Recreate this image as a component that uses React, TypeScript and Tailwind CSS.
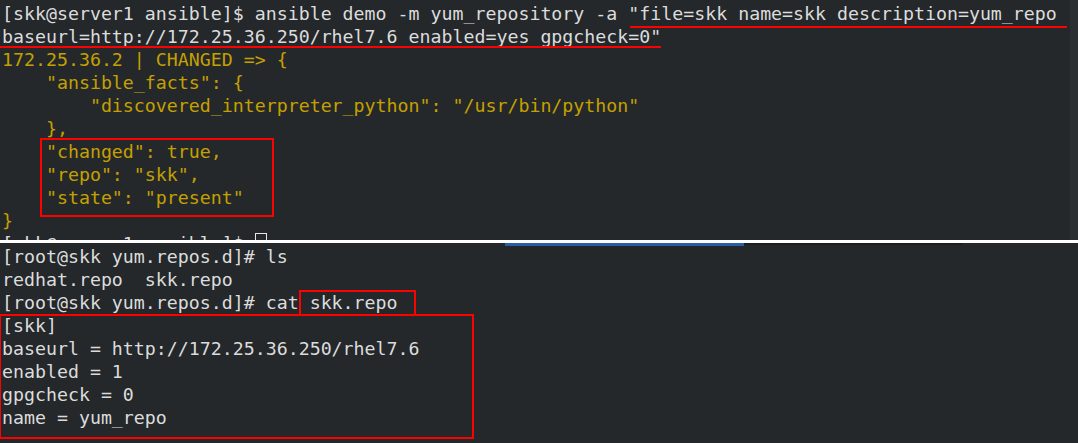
import React from "react";

const Y = "text-[#c4a000]";

export default function App() {
  const top: { t: React.ReactNode; c?: string }[] = [
    { t: '[skk@server1 ansible]$ ansible demo -m yum_repository -a "file=skk name=skk description=yum_repo' },
    { t: 'baseurl=http://172.25.36.250/rhel7.6 enabled=yes gpgcheck=0"' },
    { t: "172.25.36.2 | CHANGED => {", c: Y },
    { t: '    "ansible_facts": {', c: Y },
    { t: '        "discovered_interpreter_python": "/usr/bin/python"', c: Y },
    { t: "    },", c: Y },
    { t: '    "changed": true,', c: Y },
    { t: '    "repo": "skk",', c: Y },
    { t: '    "state": "present"', c: Y },
    { t: "}", c: Y },
  ];
  const bottom = [
    "[root@skk yum.repos.d]# ls",
    "redhat.repo  skk.repo",
    "[root@skk yum.repos.d]# cat skk.repo",
    "[skk]",
    "baseurl = http://172.25.36.250/rhel7.6",
    "enabled = 1",
    "gpgcheck = 0",
    "name = yum_repo",
  ];
  return (
    <div
      className="relative w-[1078px] h-[443px] overflow-hidden bg-[#24282b] text-[#dcdcdc] text-[18.25px] leading-[23px] whitespace-pre"
      style={{ fontFamily: '"DejaVu Sans Mono", "Liberation Mono", monospace' }}
    >
      <div className="flex h-[240px] overflow-hidden">
        <div className="flex-1 pt-[2px] pl-[2px]">
          {top.map((l, i) => (
            <div key={i} className={l.c}>
              {l.t}
            </div>
          ))}
          <div className="flex">
            <span>{"[skk@server1 ansible]$ "}</span>
            <span className="mt-[1px] w-[12px] h-[22px] border border-[#e6e6e6]" />
          </div>
        </div>
        <div className="w-[8px] bg-[#2b2f32]" />
      </div>
      <div className="h-[3px] bg-white" />
      <div className="relative h-[200px]">
        <div className="absolute left-[505px] top-0 flex">
          <div className="w-[239px] h-[3px] bg-[#2a60a3]" />
          <div className="w-[219px] h-[2px] bg-[#1c1f21]" />
        </div>
        <div className="pt-[2px] pl-[2px]">
          {bottom.map((l, i) => (
            <div key={i}>{l}</div>
          ))}
        </div>
      </div>

      {/* annotations */}
      <div className="absolute left-[630px] top-[26px] w-[437px] h-[2px] bg-[#ff0000]" />
      <div className="absolute left-0 top-[46px] w-[661px] h-[2px] bg-[#ff0000]" />
      <div className="absolute left-[40px] top-[138px] w-[234px] h-[79px] border-2 border-[#ff0000]" />
      <div className="absolute left-[299px] top-[290px] w-[117px] h-[26px] border-2 border-[#ff0000]" />
      <div className="absolute left-[-1px] top-[314px] w-[475px] h-[125px] border-2 border-[#ff0000]" />
    </div>
  );
}
